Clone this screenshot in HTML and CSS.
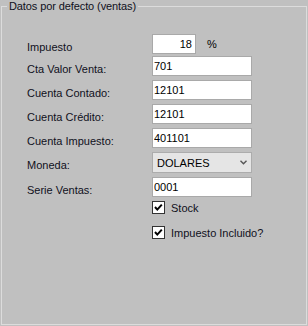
FILE: index.html
```html
<!DOCTYPE html>
<html>
<head>
    <title>Datos por defecto</title>
    <link rel="stylesheet" href="styles.css">
</head>
<body>

<fieldset class="group">
    <legend>Datos por defecto (ventas)</legend>

    <div class="form">
        <div class="row row-first">
            <label class="lbl" for="impuesto">Impuesto</label>
            <input class="txt num" id="impuesto" type="text" value="18" readonly>
            <span class="pct">%</span>
        </div>
        <div class="row">
            <label class="lbl" for="cta_valor">Cta Valor Venta:</label>
            <input class="txt" id="cta_valor" type="text" value="701" readonly>
        </div>
        <div class="row">
            <label class="lbl" for="cta_contado">Cuenta Contado:</label>
            <input class="txt" id="cta_contado" type="text" value="12101" readonly>
        </div>
        <div class="row">
            <label class="lbl" for="cta_credito">Cuenta Crédito:</label>
            <input class="txt" id="cta_credito" type="text" value="12101" readonly>
        </div>
        <div class="row">
            <label class="lbl" for="cta_impuesto">Cuenta Impuesto:</label>
            <input class="txt" id="cta_impuesto" type="text" value="401101" readonly>
        </div>
        <div class="row">
            <label class="lbl">Moneda:</label>
            <div class="combo">
                <span>DOLARES</span>
                <svg class="chev" width="7" height="5" viewBox="0 0 7 5">
                    <polyline points="0.5,0.8 3.5,3.8 6.5,0.8" fill="none" stroke="#555" stroke-width="1.4"/>
                </svg>
            </div>
        </div>
        <div class="row row-serie">
            <label class="lbl" for="serie">Serie Ventas:</label>
            <input class="txt" id="serie" type="text" value="0001" readonly>
        </div>

        <div class="check-row check-stock">
            <span class="chk">
                <svg width="11" height="11" viewBox="0 0 11 11">
                    <polyline points="2,5 4.3,7.6 8.8,2.6" fill="none" stroke="#000" stroke-width="2"/>
                </svg>
            </span>
            <span>Stock</span>
        </div>
        <div class="check-row check-incl">
            <span class="chk">
                <svg width="11" height="11" viewBox="0 0 11 11">
                    <polyline points="2,5 4.3,7.6 8.8,2.6" fill="none" stroke="#000" stroke-width="2"/>
                </svg>
            </span>
            <span>Impuesto Incluido?</span>
        </div>
    </div>
</fieldset>

</body>
</html>
```

FILE: styles.css
```css
body {
  margin: 0;
  background-color: #c0c0c0;
  font-family: "Liberation Sans", Arial, sans-serif;
  font-size: 11px;
  color: #000;
}

.group {
  box-sizing: border-box;
  width: 306px;
  height: 325px;
  margin: 0 0 0 1px;
  padding: 21px 0 0 0;
  border: 1px solid #dcdcdc;
  min-width: 0;
}

.group legend {
  margin-left: 5px;
  padding: 0 2px;
  line-height: 13px;
  letter-spacing: -0.1px;
  color: #10101c;
}

.form {
  display: flex;
  flex-direction: column;
  gap: 4px;
  padding-left: 25px;
}

.row {
  display: flex;
  height: 20px;
}

.row-first {
  margin-bottom: -2px;
}

.row-serie {
  margin-top: 1px;
}

.lbl {
  width: 125px;
  flex: none;
  padding-top: 7px;
  line-height: 13px;
  color: #10101c;
}

.txt {
  box-sizing: border-box;
  width: 100px;
  height: 20px;
  margin: 0;
  padding: 0 2px 0 1px;
  border: 1px solid #a9a9a9;
  background: #fff;
  font-family: inherit;
  font-size: 11px;
  color: #000;
  outline: none;
}

.txt.num {
  width: 44px;
  text-align: right;
  padding-right: 3px;
}

.pct {
  margin-left: 11px;
  line-height: 20px;
}

.combo {
  box-sizing: border-box;
  width: 100px;
  height: 21px;
  display: flex;
  align-items: center;
  justify-content: space-between;
  padding: 0 4px 0 4px;
  border: 1px solid #acacac;
  background: #e5e5e5;
}

.chev {
  display: block;
}

.check-row {
  display: flex;
  align-items: center;
  gap: 6px;
  height: 13px;
  margin-left: 125px;
  color: #10101c;
}

.check-stock {
  margin-top: 0;
}

.check-incl {
  margin-top: 8px;
}

.chk {
  box-sizing: border-box;
  width: 13px;
  height: 13px;
  display: flex;
  align-items: center;
  justify-content: center;
  border: 1px solid #333;
  background: #fff;
}
```
